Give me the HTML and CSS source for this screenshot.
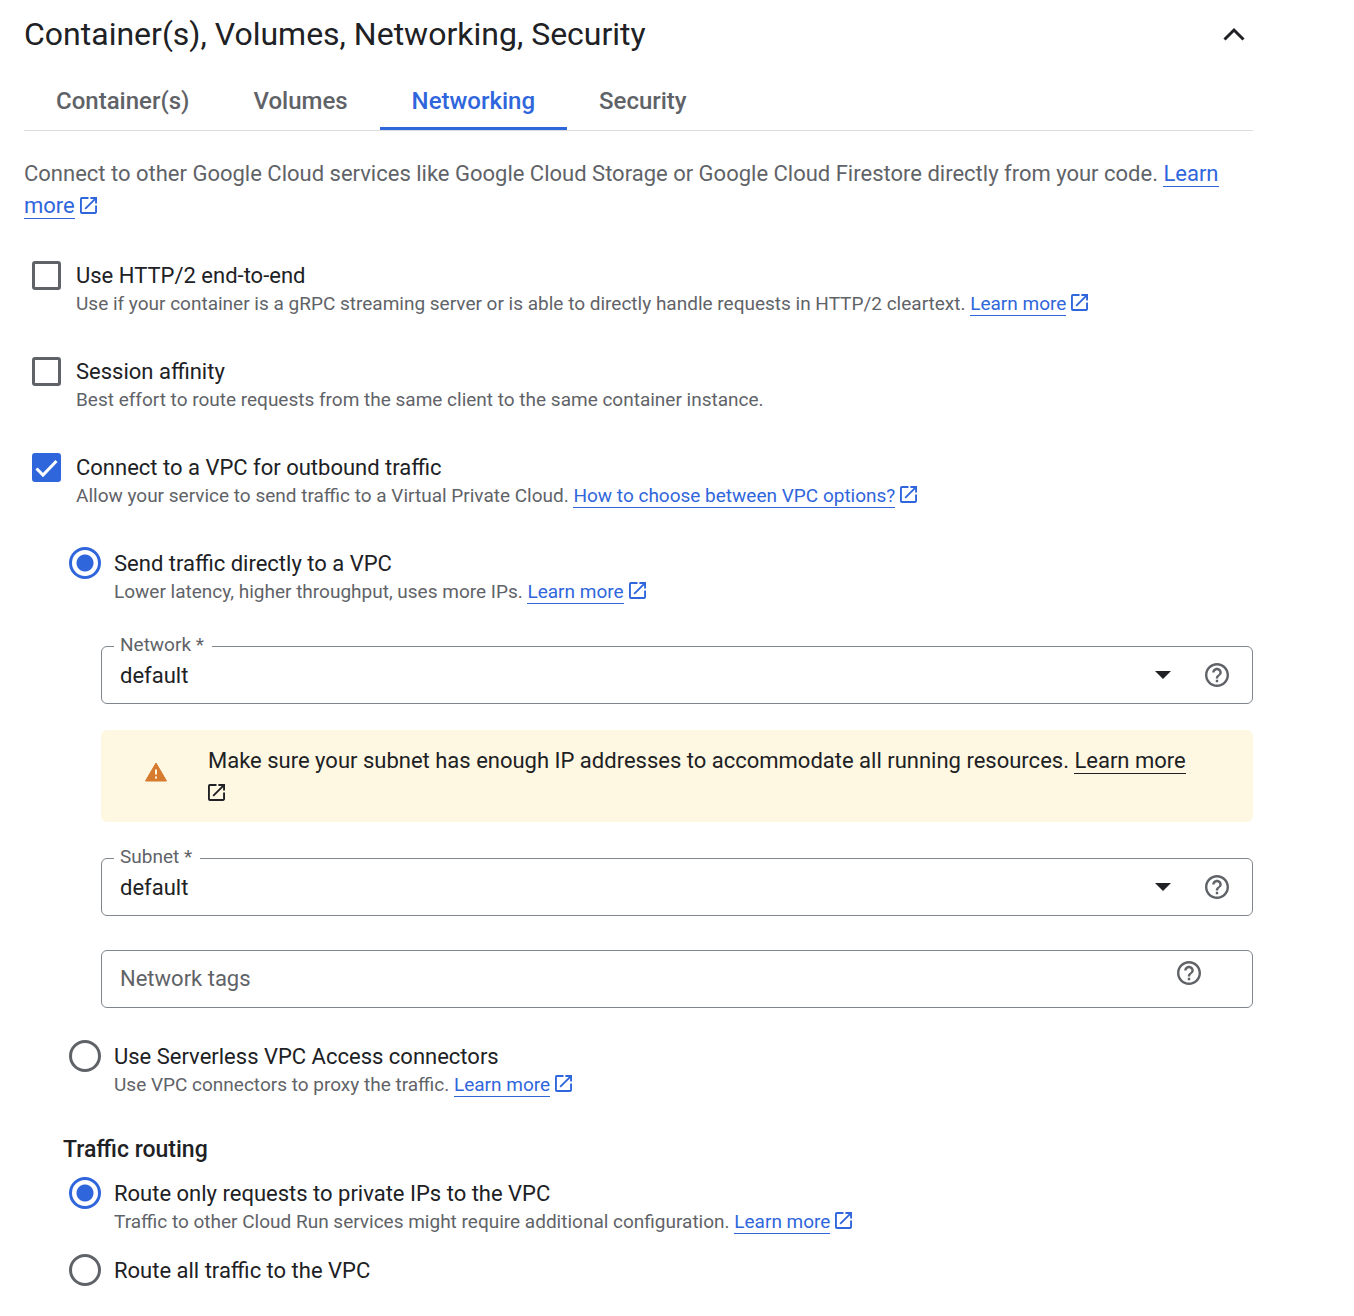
FILE: index.html
```html
<!DOCTYPE html>
<html lang="en">
<head>
<meta charset="utf-8">
<meta name="viewport" content="width=device-width, initial-scale=1">
<title>Container(s), Volumes, Networking, Security</title>
<link rel="stylesheet" href="styles.css">
</head>
<body>
<svg class="sprite" aria-hidden="true">
  <symbol id="open" viewBox="3 3 18 18"><path fill="currentColor" d="M19 19H5V5h7V3H5a2 2 0 0 0-2 2v14a2 2 0 0 0 2 2h14c1.100 0 2-.9 2-2v-7h-2v7zM14 3v2h3.590l-9.830 9.830 1.410 1.410L19 6.410V10h2V3h-7z"/></symbol>
  <symbol id="help" viewBox="2 2 20 20"><path fill="currentColor" d="M11 18h2v-2h-2v2zm1-16C6.480 2 2 6.480 2 12s4.480 10 10 10 10-4.480 10-10S17.520 2 12 2zm0 18c-4.410 0-8-3.590-8-8s3.590-8 8-8 8 3.590 8 8-3.590 8-8 8zm0-14c-2.210 0-4 1.790-4 4h2c0-1.100.9-2 2-2s2 .9 2 2c0 2-3 1.750-3 5h2c0-2.250 3-2.500 3-5 0-2.210-1.790-4-4-4z"/></symbol>
  <symbol id="arrow" viewBox="0 0 16 8"><path fill="currentColor" d="M0 0h16L8 8z"/></symbol>
</svg>
<main class="panel">
  <header class="panel-header">
    <h1 class="title">Container(s), Volumes, Networking, Security</h1>
    <button class="icon-button collapse" type="button" aria-label="Collapse section">
      <svg width="22" height="14" viewBox="0 0 22 14"><path d="M1.500 12.500 11 3l9.500 9.500" fill="none" stroke="currentColor" stroke-width="3"/></svg>
    </button>
  </header>

  <nav class="tabs" role="tablist">
    <button class="tab" type="button" role="tab">Container(s)</button>
    <button class="tab" type="button" role="tab">Volumes</button>
    <button class="tab active" type="button" role="tab" aria-selected="true">Networking</button>
    <button class="tab" type="button" role="tab">Security</button>
  </nav>

  <p class="intro">Connect to other Google Cloud services like Google Cloud Storage or Google Cloud Firestore directly from your code. <a class="link" href="#"><span class="link-text">Learn more</span><svg class="open"><use href="#open"/></svg></a></p>

  <form class="form">
    <div class="option">
      <input class="checkbox" type="checkbox" id="http2">
      <div class="option-text">
        <label class="label" for="http2">Use HTTP/2 end-to-end</label>
        <p class="hint">Use if your container is a gRPC streaming server or is able to directly handle requests in HTTP/2 cleartext. <a class="link" href="#"><span class="link-text">Learn more</span><svg class="open"><use href="#open"/></svg></a></p>
      </div>
    </div>
    <div class="option">
      <input class="checkbox" type="checkbox" id="affinity">
      <div class="option-text">
        <label class="label" for="affinity">Session affinity</label>
        <p class="hint">Best effort to route requests from the same client to the same container instance.</p>
      </div>
    </div>
    <div class="option">
      <span class="check-wrap">
        <input class="checkbox" type="checkbox" id="vpc" checked>
        <svg class="tick" viewBox="0 0 29 29"><path d="M4.500 15.500 11 22 24.500 8" fill="none" stroke="currentColor" stroke-width="3"/></svg>
      </span>
      <div class="option-text">
        <label class="label" for="vpc">Connect to a VPC for outbound traffic</label>
        <p class="hint">Allow your service to send traffic to a Virtual Private Cloud. <a class="link" href="#"><span class="link-text">How to choose between VPC options?</span><svg class="open"><use href="#open"/></svg></a></p>
      </div>
    </div>

    <div class="vpc">
      <div class="option">
        <input class="radio" type="radio" name="connection" id="direct" checked>
        <div class="option-text">
          <label class="label" for="direct">Send traffic directly to a VPC</label>
          <p class="hint">Lower latency, higher throughput, uses more IPs. <a class="link" href="#"><span class="link-text">Learn more</span><svg class="open"><use href="#open"/></svg></a></p>
        </div>
      </div>

      <div class="fields">
        <div class="field">
          <label class="float-label" for="network">Network *</label>
          <div class="select-box">
            <select class="select" id="network"><option>default</option></select>
            <svg class="arrow"><use href="#arrow"/></svg>
          </div>
          <button class="icon-button" type="button" aria-label="Help for network"><svg class="help"><use href="#help"/></svg></button>
        </div>

        <div class="notice">
          <svg class="warning" viewBox="0 0 22 20"><path fill="#d67a2d" stroke="#d67a2d" stroke-linejoin="round" d="M11 1 21.500 19H.5z"/><path fill="#fef7e2" d="M10 7.500h2v5h-2zM10 14.500h2v2h-2z"/></svg>
          <p class="notice-text">Make sure your subnet has enough IP addresses to accommodate all running resources. <a class="link dark" href="#"><span class="link-text">Learn more</span> <svg class="open"><use href="#open"/></svg></a></p>
        </div>

        <div class="field">
          <label class="float-label" for="subnet">Subnet *</label>
          <div class="select-box">
            <select class="select" id="subnet"><option>default</option></select>
            <svg class="arrow"><use href="#arrow"/></svg>
          </div>
          <button class="icon-button" type="button" aria-label="Help for subnet"><svg class="help"><use href="#help"/></svg></button>
        </div>

        <div class="field tags">
          <input class="text-input" type="text" placeholder="Network tags" aria-label="Network tags">
          <button class="icon-button" type="button" aria-label="Help for network tags"><svg class="help"><use href="#help"/></svg></button>
        </div>
      </div>

      <div class="option">
        <input class="radio" type="radio" name="connection" id="serverless">
        <div class="option-text">
          <label class="label" for="serverless">Use Serverless VPC Access connectors</label>
          <p class="hint">Use VPC connectors to proxy the traffic. <a class="link" href="#"><span class="link-text">Learn more</span><svg class="open"><use href="#open"/></svg></a></p>
        </div>
      </div>

      <h2 class="subtitle">Traffic routing</h2>
      <div class="routing">
        <div class="option">
          <input class="radio" type="radio" name="routing" id="private" checked>
          <div class="option-text">
            <label class="label" for="private">Route only requests to private IPs to the VPC</label>
            <p class="hint">Traffic to other Cloud Run services might require additional configuration. <a class="link" href="#"><span class="link-text">Learn more</span><svg class="open"><use href="#open"/></svg></a></p>
          </div>
        </div>
        <div class="option">
          <input class="radio" type="radio" name="routing" id="all">
          <div class="option-text">
            <label class="label" for="all">Route all traffic to the VPC</label>
          </div>
        </div>
      </div>
    </div>
  </form>
</main>
</body>
</html>
```
FILE: styles.css
```css
* { box-sizing: border-box; }

body {
  margin: 0;
  background: #fff;
  color: #202124;
  font-family: Roboto, "Liberation Sans", sans-serif;
  font-size: 22px;
  line-height: 32px;
}

h1, h2, p { margin: 0; }

button, input, select {
  margin: 0;
  font: inherit;
  color: inherit;
}

.sprite {
  position: absolute;
  width: 0;
  height: 0;
}

.panel { padding: 8px 101px 32px 24px; }

.panel-header {
  display: flex;
  align-items: center;
  justify-content: space-between;
  height: 52px;
}

.title {
  font-size: 32px;
  line-height: 40px;
  font-weight: 400;
}

.icon-button {
  display: flex;
  flex: none;
  padding: 0;
  border: 0;
  background: none;
  color: #5f6368;
}

.collapse {
  margin-right: 8px;
  color: #202124;
}

.tabs {
  display: flex;
  margin-top: 12px;
  border-bottom: 1px solid #dadce0;
}

.tab {
  height: 58px;
  padding: 3px 32px 0;
  border: 0;
  border-bottom: 3px solid transparent;
  background: none;
  color: #5f6368;
  font-size: 24px;
  font-weight: 500;
}

.tab.active {
  border-color: #2f66dc;
  color: #2f66dc;
}

.intro {
  margin-top: 27px;
  color: #5f6368;
}

.link {
  color: #2f66dc;
  text-decoration: none;
}

.link.dark { color: #202124; }

.link-text { border-bottom: 1px solid currentColor; }

.open {
  width: 17px;
  height: 17px;
  margin-left: 5px;
  vertical-align: -1px;
}

.dark .open { margin-left: 0; }

.form {
  display: flex;
  flex-direction: column;
  gap: 39px;
  margin: 39px 0 0 8px;
}

.option {
  display: flex;
  align-items: flex-start;
  gap: 15px;
}

.option-text {
  flex: 1;
  padding-top: 1px;
  line-height: 28px;
}

.label { display: block; }

.hint {
  color: #5f6368;
  font-size: 19px;
}

.checkbox, .radio {
  flex: none;
  appearance: none;
  border: 3px solid #5f6368;
  background: #fff;
}

.checkbox {
  width: 29px;
  height: 29px;
  border-radius: 3px;
}

.checkbox:checked {
  border-color: #2f66dc;
  background: #2f66dc;
}

.check-wrap {
  display: grid;
  flex: none;
}

.check-wrap > * { grid-area: 1 / 1; }

.tick {
  z-index: 1;
  width: 29px;
  height: 29px;
  color: #fff;
  pointer-events: none;
}

.radio {
  width: 32px;
  height: 32px;
  margin-top: -2px;
  border-radius: 50%;
}

.radio:checked {
  border-color: #2f66dc;
  background: radial-gradient(circle, #2f66dc 8px, #fff 9px);
}

.vpc { padding-left: 37px; }

.vpc .option { gap: 13px; }

.fields {
  display: flex;
  flex-direction: column;
  margin: 40px 0 34px 32px;
}

.field {
  position: relative;
  display: flex;
  align-items: center;
  height: 58px;
  padding: 0 23px 0 18px;
  border: 1px solid #80868b;
  border-radius: 6px;
}

.float-label {
  position: absolute;
  top: -16px;
  left: 12px;
  padding: 0 8px 0 6px;
  background: #fff;
  color: #5f6368;
  font-size: 19px;
  line-height: 28px;
}

.select-box {
  display: grid;
  flex: 1;
  align-items: center;
  margin-right: 34px;
}

.select-box > * { grid-area: 1 / 1; }

.select {
  appearance: none;
  width: 100%;
  padding: 2px 0 0;
  border: 0;
  background: none;
}

.arrow {
  justify-self: end;
  width: 16px;
  height: 8px;
  pointer-events: none;
}

.help {
  width: 24px;
  height: 24px;
}

.notice {
  display: flex;
  align-items: center;
  gap: 41px;
  margin: 26px 0 36px;
  padding: 15px 48px 13px 44px;
  border-radius: 6px;
  background: #fef7e2;
}

.warning {
  flex: none;
  width: 22px;
  height: 20px;
  margin-bottom: 10px;
}

.notice-text { flex: 1; }

.tags {
  align-items: flex-start;
  margin-top: 34px;
  padding: 10px 51px 0 18px;
}

.text-input {
  flex: 1;
  height: 34px;
  padding: 0;
  border: 0;
  background: none;
}

.text-input::placeholder {
  color: #5f6368;
  opacity: 1;
}

.subtitle {
  margin: 37px 0 15px -6px;
  font-size: 23px;
  line-height: 28px;
  font-weight: 500;
}

.routing {
  display: flex;
  flex-direction: column;
  gap: 20px;
}
```
